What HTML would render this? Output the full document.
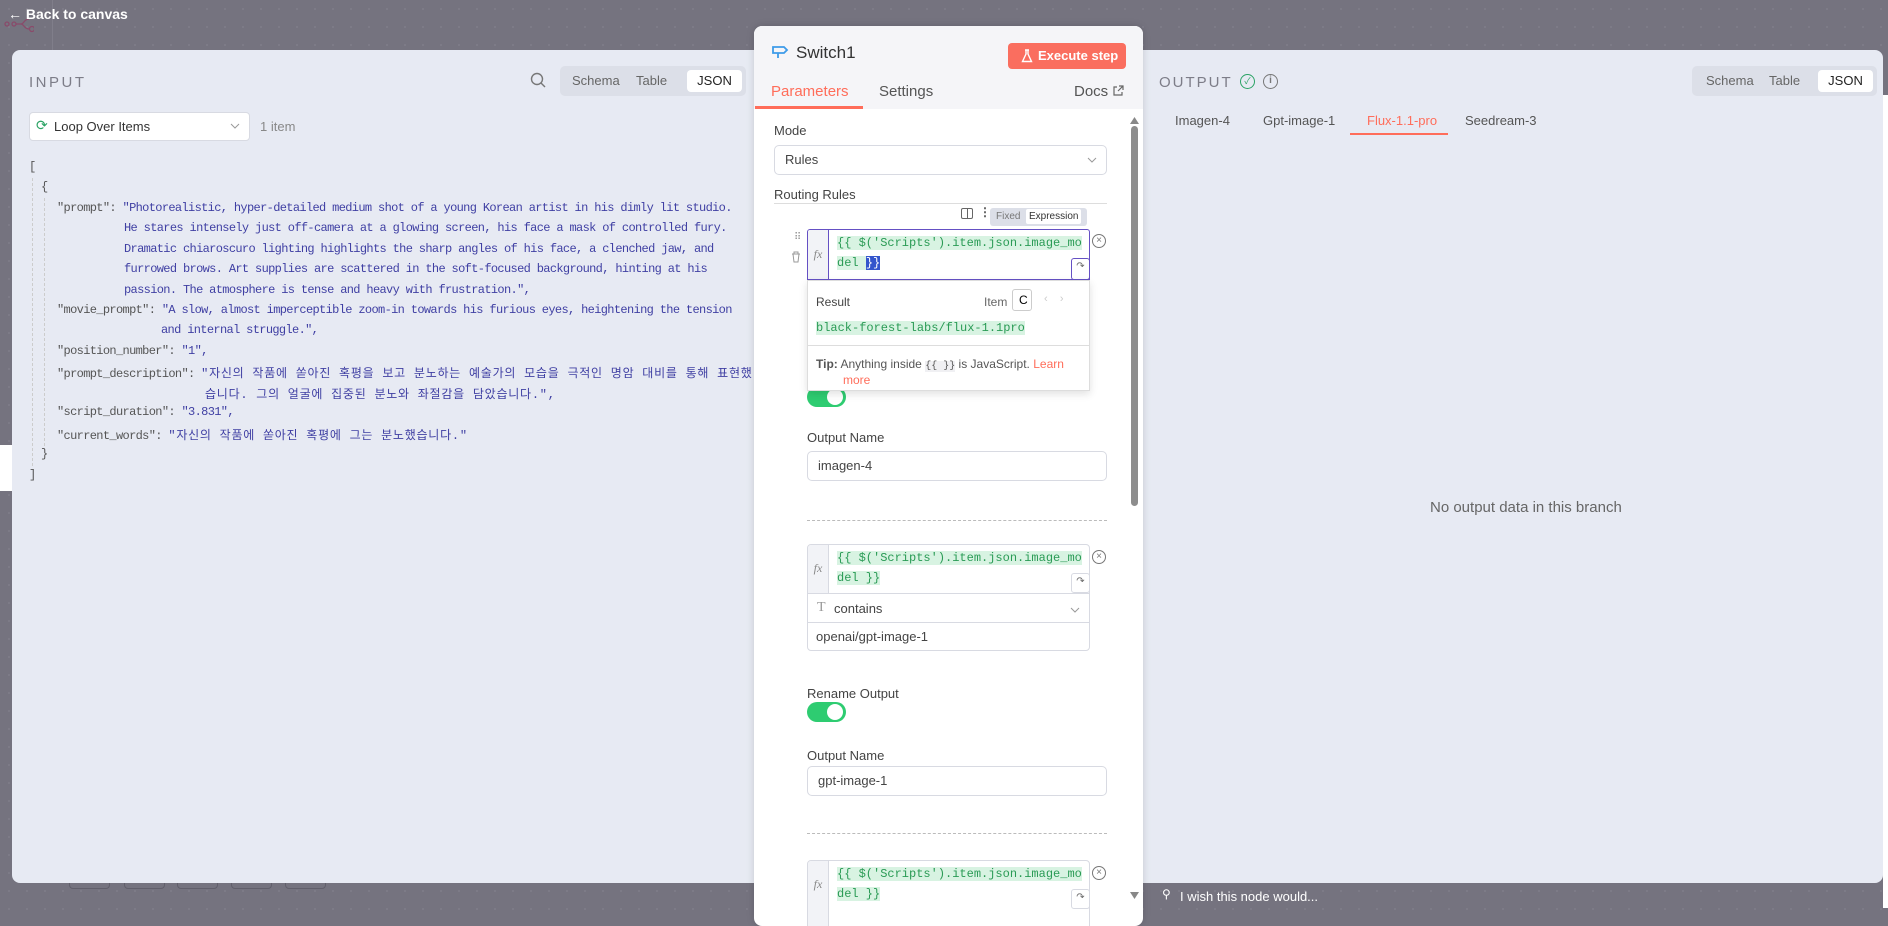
<!DOCTYPE html>
<html><head><meta charset="utf-8"><style>
*{box-sizing:border-box;margin:0;padding:0}
body{width:1888px;height:908px;overflow:hidden;background:#75737f;font-family:"Liberation Sans","Noto Sans CJK KR",sans-serif;position:relative;
background-image:radial-gradient(#807e8a 1px,transparent 1px);background-size:18px 18px}
.a{position:absolute;white-space:nowrap}
.panel{position:absolute;left:12px;top:50px;width:1871px;height:833px;background:#e7eaf3;border-radius:8px;overflow:hidden}
.tog{position:absolute;height:30px;background:#dcdfe8;border-radius:5px;font-size:13px;color:#666}
.tog span{position:absolute;top:4px;height:22px;line-height:22px}
.tog .on{background:#fff;border-radius:4px;color:#222;text-align:center}
.mono{font-family:"Liberation Mono","Noto Sans CJK KR",monospace;font-size:12px;letter-spacing:-0.65px;color:#555}
.v{color:#3f3fa3}
.k{letter-spacing:0.75px}
.modal{position:absolute;left:754px;top:26px;width:389px;height:900px;background:#fff;border-radius:8px;overflow:hidden;box-shadow:0 0 8px rgba(0,0,0,.15)}
.lbl{position:absolute;font-size:13px;color:#444}
.inp{position:absolute;background:#fff;border:1px solid #d8dae2;border-radius:5px;font-size:13px;color:#444;padding-left:10px;line-height:28px}
.code{font-family:"Liberation Mono",monospace;font-size:12px;color:#2a9b55}
.code b{font-weight:normal;background:#d8f3e2}
.expr{position:absolute;border:1px solid #d8dae2;border-radius:4px;background:#fff;overflow:hidden}
.fx{position:absolute;left:0;top:0;width:21px;background:#f2f3f7;border-right:1px solid #d8dae2;font-family:"Liberation Serif",serif;font-style:italic;font-size:12px;color:#888;text-align:center}
.sw{position:absolute;width:39px;height:20px;border-radius:10px;background:#2ecc71}
.sw:after{content:"";position:absolute;right:3px;top:2px;width:16px;height:16px;border-radius:50%;background:#fff}
.x{position:absolute;width:14px;height:14px;border:1.3px solid #777;border-radius:50%;font-size:10px;line-height:11px;text-align:center;color:#777}
.dash{position:absolute;left:53px;width:300px;border-top:1px dashed #bbb}
.rs{position:absolute;width:19px;height:17px;border:1px solid #d8dae2;border-radius:3px;background:#fff;font-size:10px;text-align:center;color:#666;line-height:15px}
</style></head><body>

<div class="a" style="left:52px;top:0;width:1px;height:50px;background:#807e8a"></div>
<svg class="a" style="left:4px;top:18px" width="30" height="16" viewBox="0 0 30 16"><g fill="none" stroke="#8a4a6a" stroke-width="1.3"><circle cx="3" cy="6" r="2"/><circle cx="10" cy="6" r="2"/><circle cx="28" cy="11" r="2.5"/><path d="M12 6h5c3 0 3 5 8 5M17 6c3 0 3-5 8-5"/></g></svg>
<div class="a" style="left:8px;top:6px;color:#fff;font-size:14px;font-weight:bold">&#8592; Back to canvas</div>
<div class="a" style="left:0;top:445px;width:12px;height:46px;background:#fff"></div>
<div class="a" style="left:1883px;top:95px;width:5px;height:813px;background:#fff"></div>
<div class="a" style="left:69px;top:880px;width:41px;height:9px;border:1px solid #615f6b;border-top:none;border-radius:0 0 4px 4px"></div>
<div class="a" style="left:124px;top:880px;width:41px;height:9px;border:1px solid #615f6b;border-top:none;border-radius:0 0 4px 4px"></div>
<div class="a" style="left:177px;top:880px;width:41px;height:9px;border:1px solid #615f6b;border-top:none;border-radius:0 0 4px 4px"></div>
<div class="a" style="left:231px;top:880px;width:41px;height:9px;border:1px solid #615f6b;border-top:none;border-radius:0 0 4px 4px"></div>
<div class="a" style="left:285px;top:880px;width:41px;height:9px;border:1px solid #615f6b;border-top:none;border-radius:0 0 4px 4px"></div>
<div class="a" style="left:1162px;top:887px;color:#fff;font-size:12px">&#9906;</div>
<div class="a" style="left:1180px;top:889px;color:#fff;font-size:13px">I wish this node would...</div>

<div class="panel">
 <div class="a" style="left:17px;top:24px;font-size:15px;letter-spacing:2.5px;color:#7d7d88">INPUT</div>
 <svg class="a" style="left:518px;top:22px" width="16" height="16" viewBox="0 0 16 16"><circle cx="7" cy="7" r="5.5" fill="none" stroke="#777" stroke-width="1.4"/><path d="M11 11l4 4" stroke="#777" stroke-width="1.4"/></svg>
 <div class="tog" style="left:548px;top:16px;width:186px"><span style="left:12px">Schema</span><span style="left:76px">Table</span><span class="on" style="left:127px;width:55px">JSON</span></div>
 <div class="a" style="left:17px;top:62px;width:221px;height:29px;background:#fff;border:1px solid #d8dae2;border-radius:4px"></div>
 <div class="a" style="left:24px;top:67px;font-size:14px;color:#2ba365">&#10227;</div>
 <div class="a" style="left:42px;top:69px;font-size:13px;color:#333">Loop Over Items</div>
 <svg class="a" style="left:218px;top:73px" width="10" height="7"><path d="M1 1l4 4 4-4" stroke="#999" fill="none"/></svg>
 <div class="a" style="left:248px;top:69px;font-size:13px;color:#888">1 item</div>

 <div class="a" style="left:20px;top:128px;width:0;height:288px;border-left:1px dashed #ccc"></div>
 <div class="a" style="left:32px;top:148px;width:0;height:248px;border-left:1px dashed #ccc"></div>
 <div class="mono">
  <div class="a" style="left:17px;top:110px">[</div>
  <div class="a" style="left:29px;top:130px">{</div>
  <div class="a" style="left:45px;top:151px">"prompt":  <span class="v">"Photorealistic, hyper-detailed medium shot of a young Korean artist in his dimly lit studio.</span></div>
  <div class="a v" style="left:112px;top:171px">He stares intensely just off-camera at a glowing screen, his face a mask of controlled fury.</div>
  <div class="a v" style="left:112px;top:192px">Dramatic chiaroscuro lighting highlights the sharp angles of his face, a clenched jaw, and</div>
  <div class="a v" style="left:112px;top:212px">furrowed brows. Art supplies are scattered in the soft-focused background, hinting at his</div>
  <div class="a v" style="left:112px;top:233px">passion. The atmosphere is tense and heavy with frustration.",</div>
  <div class="a" style="left:45px;top:253px">"movie_prompt":  <span class="v">"A slow, almost imperceptible zoom-in towards his furious eyes, heightening the tension</span></div>
  <div class="a v" style="left:149px;top:273px">and internal struggle.",</div>
  <div class="a" style="left:45px;top:294px">"position_number":  <span class="v">"1",</span></div>
  <div class="a" style="left:45px;top:314px">"prompt_description":  <span class="v k">"자신의 작품에 쏟아진 혹평을 보고 분노하는 예술가의 모습을 극적인 명암 대비를 통해 표현했</span></div>
  <div class="a v k" style="left:193px;top:335px">습니다. 그의 얼굴에 집중된 분노와 좌절감을 담았습니다.",</div>
  <div class="a" style="left:45px;top:355px">"script_duration":  <span class="v">"3.831",</span></div>
  <div class="a" style="left:45px;top:376px">"current_words":  <span class="v k">"자신의 작품에 쏟아진 혹평에 그는 분노했습니다."</span></div>
  <div class="a" style="left:29px;top:397px">}</div>
  <div class="a" style="left:17px;top:418px">]</div>
 </div>

 <div class="a" style="left:1147px;top:24px;font-size:15px;letter-spacing:2px;color:#7d7d88">OUTPUT</div>
 <div class="a" style="left:1228px;top:24px;width:15px;height:15px;border:1.5px solid #2ba365;border-radius:50%;color:#2ba365;font-size:9px;text-align:center;line-height:12px">&#10003;</div>
 <div class="a" style="left:1251px;top:24px;width:15px;height:15px;border:1.5px solid #777;border-radius:50%;color:#777;font-size:10px;text-align:center;line-height:12px;font-weight:bold">i</div>
 <div class="tog" style="left:1680px;top:16px;width:185px"><span style="left:14px">Schema</span><span style="left:77px">Table</span><span class="on" style="left:126px;width:55px">JSON</span></div>
 <div class="a" style="left:1163px;top:63px;font-size:13px;color:#555">Imagen-4</div>
 <div class="a" style="left:1251px;top:63px;font-size:13px;color:#555">Gpt-image-1</div>
 <div class="a" style="left:1355px;top:63px;font-size:13px;color:#ff6d5a">Flux-1.1-pro</div>
 <div class="a" style="left:1338px;top:83px;width:98px;height:2px;background:#ff6d5a"></div>
 <div class="a" style="left:1453px;top:63px;font-size:13px;color:#555">Seedream-3</div>
 <div class="a" style="left:1418px;top:449px;font-size:15px;color:#666">No output data in this branch</div>
</div>

<div class="modal">
 <div class="a" style="left:0;top:0;width:389px;height:83px;background:#f5f5f8"></div>
 <svg class="a" style="left:17px;top:18px" width="18" height="14" viewBox="0 0 18 14"><path d="M2 3h11l3 3-3 3H2zM7 9v5" fill="none" stroke="#3d9be9" stroke-width="1.8"/></svg>
 <div class="a" style="left:42px;top:17px;font-size:17px;color:#333">Switch1</div>
 <div class="a" style="left:254px;top:17px;width:118px;height:26px;background:#fa6e5f;border-radius:4px;color:#fff;font-size:13px;font-weight:bold;line-height:26px;padding-left:30px">Execute step</div>
 <svg class="a" style="left:267px;top:23px" width="12" height="14" viewBox="0 0 12 14"><path d="M4 1h4M5 1v4L1.5 12.5h9L7 5V1" fill="none" stroke="#fff" stroke-width="1.4"/></svg>
 <div class="a" style="left:17px;top:57px;font-size:15px;color:#ff6d5a">Parameters</div>
 <div class="a" style="left:1px;top:80px;width:108px;height:3px;background:#ff6d5a"></div>
 <div class="a" style="left:125px;top:57px;font-size:15px;color:#555">Settings</div>
 <div class="a" style="left:320px;top:57px;font-size:15px;color:#555">Docs</div>
 <svg class="a" style="left:358px;top:59px" width="12" height="12"><path d="M5 2H2v8h8V7M7 1h4v4M11 1L6 6" fill="none" stroke="#666" stroke-width="1.2"/></svg>

 <div class="a" style="left:376px;top:91px;width:9px;height:7px;background:#888;clip-path:polygon(50% 0,100% 100%,0 100%)"></div>
 <div class="a" style="left:377px;top:100px;width:7px;height:380px;background:#8d8d8d;border-radius:4px"></div>
 <div class="a" style="left:376px;top:866px;width:9px;height:7px;background:#888;clip-path:polygon(0 0,100% 0,50% 100%)"></div>

 <div class="lbl" style="left:20px;top:97px">Mode</div>
 <div class="inp" style="left:20px;top:119px;width:333px;height:30px">Rules</div>
 <svg class="a" style="left:333px;top:131px" width="10" height="7"><path d="M1 1l4 4 4-4" stroke="#999" fill="none"/></svg>
 <div class="lbl" style="left:20px;top:161px">Routing Rules</div>
 <div class="a" style="left:20px;top:177px;width:333px;height:1px;background:#ddd"></div>
 <div class="a" style="left:207px;top:182px;width:12px;height:11px;border:1.3px solid #666;border-radius:2px"></div>
 <div class="a" style="left:213px;top:182px;width:1px;height:11px;background:#666"></div>
 <div class="a" style="left:225px;top:179px;font-size:12px;color:#555;font-weight:bold">&#8942;</div>
 <div class="a" style="left:236px;top:182px;width:97px;height:18px;background:#dcdfe8;border-radius:3px;font-size:10px"><span class="a" style="left:6px;top:3px;color:#777">Fixed</span><span class="a" style="left:36px;top:1px;background:#fff;padding:2px 3px;border-radius:2px;color:#333">Expression</span></div>

 <div class="a" style="left:40px;top:206px;font-size:10px;color:#999">&#10303;</div>
 <svg class="a" style="left:37px;top:225px" width="10" height="12"><path d="M1 3h8M3 3V1h4v2M2 3l1 8h4l1-8" fill="none" stroke="#999"/></svg>
 <div class="expr" style="left:53px;top:203px;width:283px;height:51px;border:1.5px solid #6550c4;border-radius:3px 3px 0 0">
  <div class="fx" style="height:51px;line-height:48px;border-right:1.5px solid #6550c4">fx</div>
  <div class="a code" style="left:29px;top:6px"><b>{{ $('Scripts').item.json.image_mo</b></div>
  <div class="a code" style="left:29px;top:26px"><b>del </b><b style="background:#3355cc;color:#fff">}}</b></div>
  <div class="rs" style="right:-1px;top:28px;height:22px;border:1.5px solid #6550c4">&#8631;</div>
 </div>
 <div class="x" style="left:338px;top:208px">&#215;</div>
 <div class="a" style="left:53px;top:254px;width:283px;height:111px;background:#fff;border:1px solid #ddd;box-shadow:0 3px 8px rgba(0,0,0,.12);z-index:2">
  <div class="a" style="left:8px;top:14px;font-size:12px;color:#444">Result</div>
  <div class="a" style="left:176px;top:14px;font-size:12px;color:#666">Item</div>
  <div class="a" style="left:204px;top:8px;width:20px;height:22px;border:1px solid #ccc;border-radius:3px;font-size:12px;padding-left:6px;line-height:20px">C</div>
  <div class="a" style="left:236px;top:12px;font-size:11px;color:#ccc">&#8249; &nbsp;&nbsp; &#8250;</div>
  <div class="a code" style="left:8px;top:40px"><b>black-forest-labs/flux-1.1pro</b></div>
  <div class="a" style="left:0;top:64px;width:281px;height:1px;background:#ddd"></div>
  <div class="a" style="left:8px;top:76px;font-size:12px;color:#555"><b>Tip:</b> Anything inside <span style="font-family:'Liberation Mono',monospace;font-size:10px;background:#f0f0f3">{{ }}</span> is JavaScript. <span style="color:#ff6d5a">Learn</span></div>
  <div class="a" style="left:35px;top:92px;font-size:12px;color:#ff6d5a">more</div>
 </div>
 <div class="sw" style="left:53px;top:361px"></div>

 <div class="lbl" style="left:53px;top:404px">Output Name</div>
 <div class="inp" style="left:53px;top:425px;width:300px;height:30px">imagen-4</div>
 <div class="dash" style="top:494px"></div>

 <div class="expr" style="left:53px;top:518px;width:283px;height:107px">
  <div class="fx" style="height:48px;line-height:46px">fx</div>
  <div class="a code" style="left:29px;top:6px"><b>{{ $('Scripts').item.json.image_mo</b></div>
  <div class="a code" style="left:29px;top:26px"><b>del }}</b></div>
  <div class="rs" style="right:-1px;top:28px;height:20px">&#8631;</div>
  <div class="a" style="left:0;top:48px;width:283px;height:1px;background:#d8dae2"></div>
  <div class="a" style="left:9px;top:55px;font-family:'Liberation Serif',serif;font-size:14px;color:#999">T</div>
  <div class="a" style="left:26px;top:56px;font-size:13px;color:#444">contains</div>
  <svg class="a" style="left:262px;top:62px" width="10" height="7"><path d="M1 1l4 4 4-4" stroke="#999" fill="none"/></svg>
  <div class="a" style="left:0;top:77px;width:283px;height:1px;background:#d8dae2"></div>
  <div class="a" style="left:8px;top:84px;font-size:13px;color:#444">openai/gpt-image-1</div>
 </div>
 <div class="x" style="left:338px;top:524px">&#215;</div>

 <div class="lbl" style="left:53px;top:660px">Rename Output</div>
 <div class="sw" style="left:53px;top:676px"></div>
 <div class="lbl" style="left:53px;top:722px">Output Name</div>
 <div class="inp" style="left:53px;top:740px;width:300px;height:30px">gpt-image-1</div>
 <div class="dash" style="top:807px"></div>

 <div class="expr" style="left:53px;top:834px;width:283px;height:80px">
  <div class="fx" style="height:80px;line-height:46px">fx</div>
  <div class="a code" style="left:29px;top:6px"><b>{{ $('Scripts').item.json.image_mo</b></div>
  <div class="a code" style="left:29px;top:26px"><b>del }}</b></div>
  <div class="rs" style="right:-1px;top:28px;height:20px">&#8631;</div>
 </div>
 <div class="x" style="left:338px;top:840px">&#215;</div>
</div>
</body></html>
